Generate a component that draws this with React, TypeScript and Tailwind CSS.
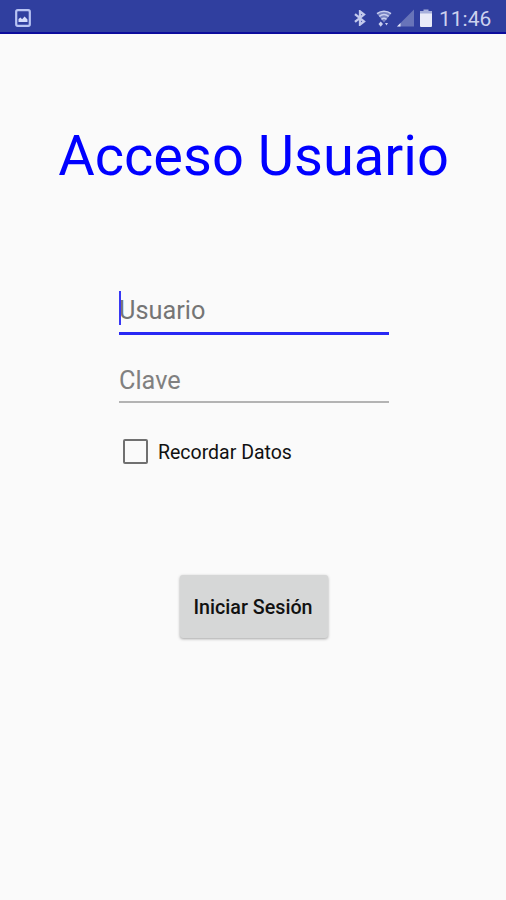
import { useState } from "react";

function StatusBar() {
  return (
    <header className="flex h-[34px] items-center justify-between border-b-2 border-[#0c0c9c] bg-[#303f9f] pt-[4px] pl-[15px] pr-[13px]">
      <svg width="16" height="18" viewBox="0 0 16 18" fill="none">
        <rect x="1.2" y="1.2" width="13.6" height="15.6" rx="1.5" stroke="#b9c4f3" strokeWidth="2.2" />
        <path d="M3.5 13V10l2-1.6 1.6 1.8L9.6 7.6l2.9 3V13z" fill="#d5dcfb" />
      </svg>
      <div className="flex items-center">
        <svg width="12" height="16" viewBox="0 0 12 16" fill="none" stroke="#c2c9ec" strokeWidth="2.3">
          <path d="M1 4.2l9 7.2-4 3.2V1.4l4 3.2-9 7.2" />
        </svg>
        <svg className="ml-[10px]" width="16" height="17" viewBox="0 0 16 17" fill="none">
          <path d="M1 3.7C5 .6 11 .6 15 3.7L8 12.6z" fill="#7883c3" />
          <path d="M1 3.7C5 .5 11 .5 15 3.7M3.3 6.4c3-2.3 6.4-2.3 9.4 0M5.5 9.3c1.6-1.3 3.4-1.3 5 0" stroke="#c9cff0" strokeWidth="1.5" />
          <path d="M2.5 14l2.2-2.6L7 14zM4.7 16.8L2.5 14H7zM9 13h3l-1.5 2.4z" fill="#c9cff0" />
        </svg>
        <svg className="ml-[5px]" width="18" height="18" viewBox="0 0 18 18">
          <path d="M17 .5v17H0z" fill="#6874b9" />
          <path d="M3.5 14v3.5H0z" fill="#e2e6fa" />
        </svg>
        <svg className="ml-[5px]" width="12" height="18" viewBox="0 0 12 18">
          <path d="M3.5.5h5V2H12v3H0V2h3.5z" fill="#a6afdb" />
          <path d="M0 4.5h12V17a1 1 0 0 1-1 1H1a1 1 0 0 1-1-1z" fill="#e9ebf8" />
        </svg>
        <span className="ml-[7px] w-[54px] whitespace-nowrap pt-[1px] text-[21px] leading-[24px] text-[#ccd1ee]">11:46</span>
      </div>
    </header>
  );
}

export default function App() {
  const [remember, setRemember] = useState(false);

  return (
    <div className="flex h-[900px] w-[506px] flex-col overflow-hidden bg-[#fafafa] font-['Roboto',sans-serif]">
      <StatusBar />
      <main className="flex flex-col items-center">
        <h1 className="mt-[89px] ml-[1px] whitespace-nowrap text-[56px] leading-[66px] text-[#0000ff]">Acceso Usuario</h1>

        <form className="mt-[101px] ml-[2px] flex w-[270px] flex-col" onSubmit={(e) => e.preventDefault()}>
          <div className="relative flex h-[45px] items-center border-b-[3px] border-[#2828f4] pb-px">
            <span className="absolute top-[1px] left-0 h-[34px] w-[2px] bg-[#3838f4]" />
            <span className="text-[25.3px] leading-[30px] text-[#757575]">Usuario</span>
          </div>
          <div className="mt-[28px] flex h-[40px] items-center border-b-2 border-[#b3b3b3] pb-[2px]">
            <span className="text-[25.3px] leading-[30px] text-[#808080]">Clave</span>
          </div>
          <button
            type="button"
            role="checkbox"
            aria-checked={remember}
            onClick={() => setRemember(!remember)}
            className="mt-[35px] ml-[4px] flex h-[27px] items-center gap-[10px]"
          >
            <span className="flex size-[25px] items-center justify-center rounded-[2px] border-[2px] border-[#707070]">
              {remember && <span className="size-[15px] bg-[#0000ff]" />}
            </span>
            <span className="whitespace-nowrap pt-[2px] text-[19.5px] leading-[24px] text-[#111111]">Recordar Datos</span>
          </button>
          <button
            type="submit"
            className="mt-[110px] flex h-[63px] w-[148px] items-center justify-center self-center rounded-[3px] bg-[#d6d7d7] pt-[2px] pr-[2px] text-[19.7px] font-medium text-[#111111] shadow-[0_1px_3px_rgba(0,0,0,0.35)]"
          >
            <span className="whitespace-nowrap">Iniciar Sesión</span>
          </button>
        </form>
      </main>
    </div>
  );
}
